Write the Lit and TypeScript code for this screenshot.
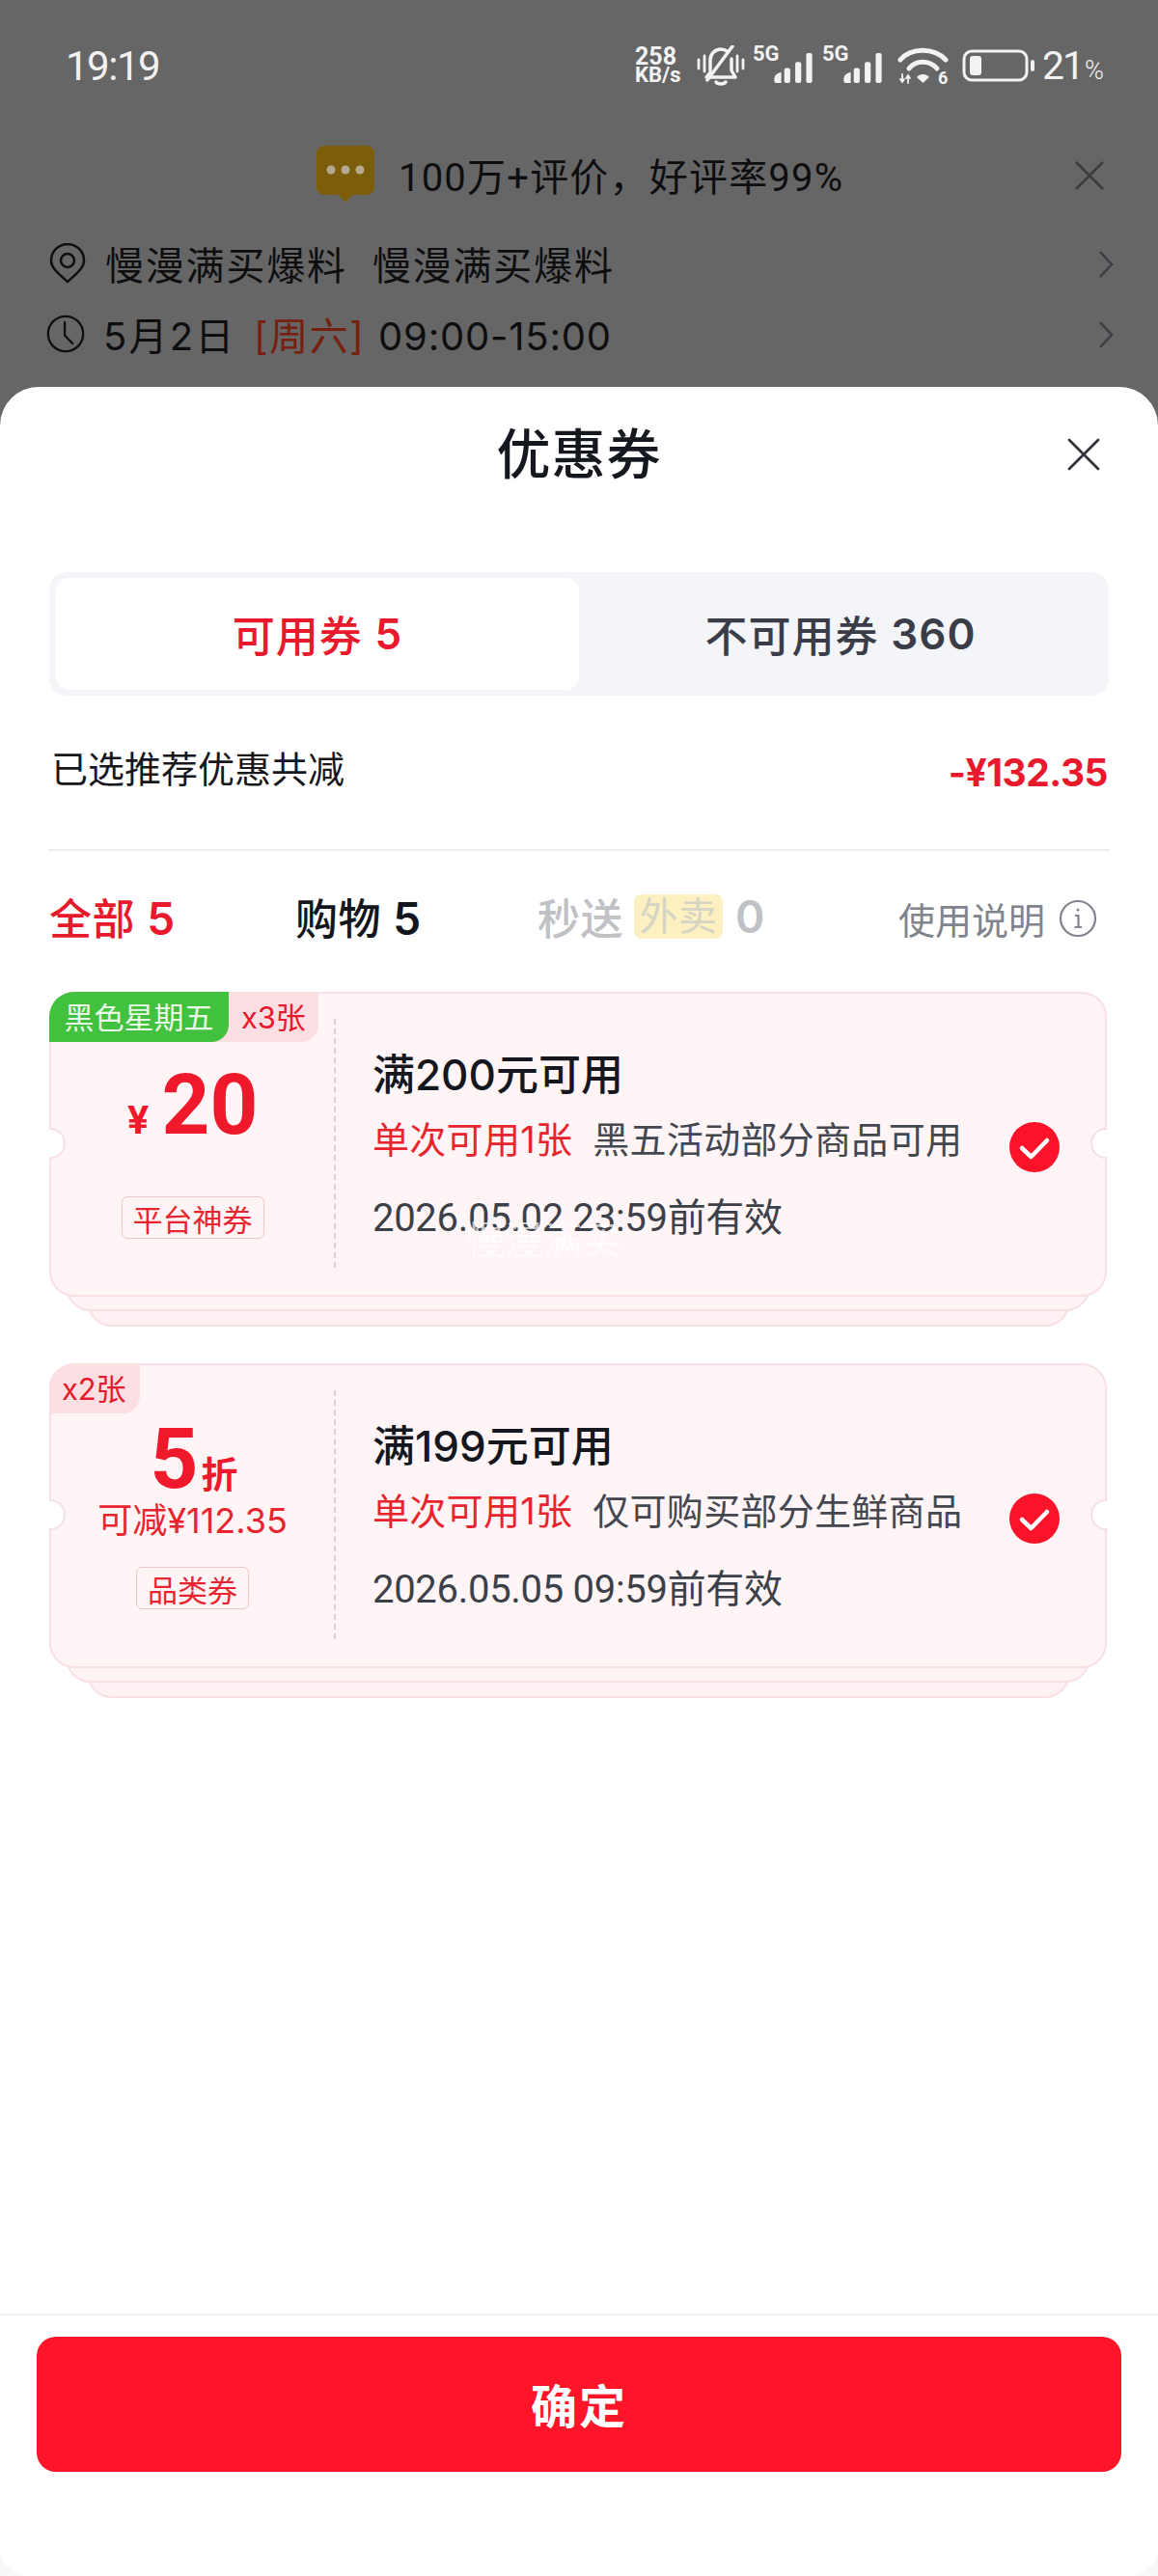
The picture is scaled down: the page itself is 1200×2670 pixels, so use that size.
import { LitElement, html, css, svg } from "lit";
import { customElement } from "lit/decorators.js";

const checkIcon = html`<svg class="check" viewBox="0 0 52 52"><circle cx="26" cy="26" r="26" fill="#fb1429"/><path d="M13 27l9.500 9L39 19" fill="none" stroke="#fff" stroke-width="4.500" stroke-linecap="round" stroke-linejoin="round"/></svg>`;

const signal = svg`<g fill="#f2f2f2"><path d="M0 26c0-3 2-6 7-7v11H2a2 2 0 0 1-2-2z"/><rect x="10" y="15" width="6" height="15" rx="2"/><rect x="21" y="9" width="6" height="21" rx="2"/><rect x="32" y="0" width="6" height="30" rx="2"/></g>`;

@customElement("app-root")
export class AppRoot extends LitElement {
  static styles = css`
    :host { display: block; width: 1200px; height: 2670px; overflow: hidden; background: #666; font-family: Inter, "Noto Sans CJK SC", sans-serif; color: #0e0e10; }
    * { box-sizing: border-box; }
    .page { display: flex; flex-direction: column; height: 2670px; }
    .top { height: 401px; flex: none; display: flex; flex-direction: column; }
    .status { height: 136px; flex: none; display: flex; align-items: center; justify-content: space-between; padding: 0 60px 0 68px; color: #f2f2f2; }
    .time { font-size: 42px; font-weight: 400; letter-spacing: -1.500px; font-family: Roboto, sans-serif; }
    .sicons { display: flex; align-items: center; }
    .speed { display: flex; flex-direction: column; font-family: Roboto, sans-serif; font-weight: 700; line-height: 19px; font-size: 25px; width: 54px; align-items: flex-start; margin-right: 10px; }
    .speed span:last-child { font-size: 22px; }
    .bell { width: 50px; height: 42px; margin-right: 8px; }
    .net { display: flex; width: 66px; height: 36px; position: relative; margin-right: 6px; }
    .net b { position: absolute; left: 0; top: -4px; font: 700 22px/20px Roboto, sans-serif; }
    .net svg { position: absolute; right: 0; bottom: 0; width: 48px; height: 31px; }
    .net + .wifi { margin-left: 6px; }
    .wifi { width: 54px; height: 40px; margin-right: 13px; }
    .batt { width: 76px; height: 34px; margin-right: 7px; }
    .pct { font: 400 41px/1 Roboto, sans-serif; display: flex; align-items: baseline; letter-spacing: -2px; width: 60px; }
    .pct small { font-size: 27px; margin-left: 2px; letter-spacing: 0; font-weight: 300; }
    .banner { height: 70px; flex: none; margin-top: 10px; display: flex; align-items: center; position: relative; padding-left: 328px; }
    .bubble { width: 60px; height: 60px; margin-right: 25px; }
    .banner span { font-size: 40px; letter-spacing: 1.200px; font-family: Roboto, "Noto Sans CJK SC", sans-serif; }
    .x { width: 30px; height: 30px; position: absolute; left: 1114px; top: 21px; }
    .row { display: flex; align-items: center; height: 60px; padding: 0 45px 0 50px; }
    .row.loc { margin-top: 27px; }
    .row.clk { margin-top: 13px; }
    .row svg.ic { width: 40px; height: 42px; flex: none; margin-right: 19px; }
    .row .txt { flex: 1; font-size: 40px; letter-spacing: 1.800px; white-space: pre; }
    .row.clk .txt { letter-spacing: 2.200px; }
    .row.clk svg.ic { margin-right: 19px; margin-left: -2px; height: 44px; }
    .row .wk { color: #77200f; margin-left: 5px; letter-spacing: 1.600px; }
    .row .tm { letter-spacing: 0.800px; margin-left: 0; }
    .row svg.chev { width: 18px; height: 30px; flex: none; margin-top: 2px; }
    .sheet { flex: 1; min-height: 0; background: #fff; border-radius: 40px 40px 0 0; display: flex; flex-direction: column; position: relative; }
    .head { height: 140px; flex: none; display: flex; align-items: center; justify-content: center; position: relative; padding-bottom: 10px; }
    .head h1 { margin: 0; font-size: 56px; font-weight: 500; color: #16181f; letter-spacing: 1px; }
    .head svg { position: absolute; left: 1106px; top: 53px; width: 34px; height: 34px; }
    .seg { margin: 52px 51px 0; height: 128px; flex: none; background: #f4f5f9; border-radius: 18px; padding: 6px 7px; display: flex; }
    .seg div { width: 542px; display: flex; align-items: center; justify-content: center; font-size: 44px; font-weight: 500; color: #3a3d48; letter-spacing: 1px; white-space: pre; }
    .seg div.on { background: #fff; border-radius: 14px; color: #e8192c; }
    .seg b { font-weight: 600; }
    .sum { margin: 0 52px 0 53px; height: 159px; flex: none; display: flex; justify-content: space-between; align-items: center; }
    .sum span { font-size: 38px; color: #17181d; margin-top: -12px; }
    .sum b { font-size: 39px; font-weight: 700; color: #e8192c; letter-spacing: -0.500px; }
    .rule { height: 2px; margin: 0 51px; background: #ececee; flex: none; }
    .filters { margin: 33px 51px 0 51px; height: 70px; flex: none; display: flex; align-items: center; font-size: 44px; font-weight: 500; }
    .filters > span { white-space: pre; letter-spacing: 0.500px; }
    .filters b { font-weight: 600; font-size: 46px; }
    .f1 { color: #e8192c; width: 255px; }
    .f2 { color: #14161d; width: 251px; }
    .f3 { color: #c0c1c5; display: flex; align-items: center; }
    .f3 em { font-style: normal; font-weight: 400; font-size: 40px; background: #fdf1c2; color: #d6d4c2; border-radius: 8px; height: 46px; line-height: 46px; width: 92px; text-align: center; margin: 0 13px 0 11px; }
    .help { margin-left: auto; display: flex; align-items: center; font-size: 38px; font-weight: 400; color: #81848e; gap: 14px; padding-top: 2px; }
    .help svg { width: 40px; height: 40px; margin-right: 12px; margin-top: 2px; }
    .list { display: flex; flex-direction: column; gap: 38px; margin: 43px 53px 0 51px; }
    .stack { position: relative; height: 347px; }
    .l3, .l2 { position: absolute; background: #fff1f3; border: 2px solid #f9e0e5; border-radius: 26px; }
    .l3 { left: 39px; right: 38px; top: 60px; bottom: 0; }
    .l2 { left: 17px; right: 17px; top: 60px; bottom: 16px; background: #fff3f5; }
    .card { position: absolute; left: 0; right: 0; top: 0; height: 316px; background: #fff5f6; border: 2px solid #f9e0e5; border-radius: 26px; display: flex; }
    .notch { position: absolute; width: 17px; height: 32px; background: #fff; border: 2px solid #f4e0e4; top: 141px; z-index: 1; }
    .notch.l { left: 0; border-left: 0; border-radius: 0 16px 16px 0; }
    .notch.r { right: 0; border-right: 0; border-radius: 16px 0 0 16px; }
    .tags { position: absolute; left: -2px; top: -2px; display: flex; height: 52px; background: #fbdfe3; border-radius: 26px 0 18px 0; }
    .tags .g { background: #42c13e; color: #e9f8e6; font-size: 31px; width: 186px; display: flex; align-items: center; justify-content: center; border-radius: 26px 0 18px 0; padding-bottom: 3px; }
    .tags .n { color: #e8192c; font-size: 31px; display: flex; align-items: center; padding: 0 14px 3px 13px; letter-spacing: -0.200px; }
    .tags .n.solo { padding: 0 15px 3px 13px; }
    .left { width: 293px; flex: none; display: flex; flex-direction: column; align-items: center; position: relative; color: #f0192c; }
    .amt { height: 200px; display: flex; align-items: baseline; justify-content: center; padding-top: 72px; line-height: 1; }
    .amt .y { font-size: 40px; font-weight: 700; margin-right: 13px; }
    .amt .v { font-family: Roboto, sans-serif; font-size: 87px; font-weight: 700; }
    .left.disc .amt { height: 104px; padding-top: 54px; padding-left: 3px; }
    .amt .z { font-size: 38px; font-weight: 700; margin-left: 3px; }
    .cut { font-size: 36px; color: #e8252f; line-height: 48px; margin-top: 33px; }
    .badge { border: 1.500px solid #e8c8cd; border-radius: 6px; height: 44px; padding: 0 11px; font-size: 31px; color: #e8252f; display: flex; align-items: center; white-space: nowrap; }
    .left.full .badge { margin-top: 10px; }
    .left.disc .badge { margin-top: 24px; }
    .dash { width: 0; margin: 26px 0 28px; border-left: 2px dashed #d8d2d4; flex: none; }
    .right { flex: 1; padding: 54px 0 0 38px; min-width: 0; }
    .t { font-size: 44px; font-weight: 500; color: #15171f; line-height: 60px; }
    .u { font-size: 38px; line-height: 50px; margin-top: 12px; color: #444750; white-space: nowrap; letter-spacing: 0.300px; }
    .u i { font-style: normal; color: #e8252f; margin-right: 21px; }
    .d { font-family: Roboto, "Noto Sans CJK SC", sans-serif; font-size: 40px; line-height: 50px; margin-top: 32px; color: #3c4049; letter-spacing: -0.300px; }
    .check { position: absolute; width: 52px; height: 52px; left: 993px; top: 133px; }
    .mark { position: absolute; left: 430px; top: 224px; font-size: 40px; color: rgba(255,255,255,0.7); z-index: 1; white-space: nowrap; }
    .foot { margin-top: auto; flex: none; height: 272px; background: #f8f8f8; }
    .footin { height: 100%; background: #fff; border-top: 2px solid #f3f3f4; border-radius: 0 0 30px 30px; padding: 22px 38px 0; }
    .btn { height: 140px; border-radius: 20px; background: #ff1428; color: #fff; font-size: 48px; font-weight: 700; display: flex; align-items: center; justify-content: center; letter-spacing: 2px; padding-bottom: 3px; }
  `;

  private coupon(o: { amount: any; title: string; note: string; date: string; mark?: boolean }) {
    return html`<div class="stack">
      <div class="l3"></div><div class="l2"></div>
      <div class="card">
        ${o.amount}
        <div class="dash"></div>
        <div class="right">
          <div class="t">${o.title}</div>
          <div class="u"><i>单次可用1张</i>${o.note}</div>
          <div class="d">${o.date}</div>
        </div>
        ${checkIcon}
        ${o.mark ? html`<div class="mark">慢漫满买</div>` : ""}
      </div>
      <div class="notch l"></div>
      <div class="notch r"></div>
    </div>`;
  }

  render() {
    return html`<div class="page">
      <div class="top">
        <div class="status">
          <span class="time">19:19</span>
          <div class="sicons">
            <div class="speed"><span>258</span><span>KB/s</span></div>
            <svg class="bell" viewBox="0 0 50 42" fill="none" stroke="#f2f2f2" stroke-width="3.500" stroke-linecap="round" stroke-linejoin="round"><path d="M2 15v9M8 11v16M42 11v16M48 15v9" stroke-width="2.800"/><path d="M14 26V15c0-6 5-11 11-11 3 0 5 1 7 2.500M36 14v12l4 7H10l4-5"/><path d="M37 1L11 36" /><path d="M20 38c1.500 2.500 8.500 2.500 10 0"/></svg>
            <div class="net"><b>5G</b><svg viewBox="0 0 38 30">${signal}</svg></div>
            <div class="net"><b>5G</b><svg viewBox="0 0 38 30">${signal}</svg></div>
            <svg class="wifi" viewBox="0 0 54 40" fill="none" stroke="#f2f2f2" stroke-linecap="round"><path d="M3 14C14 1 38 1 50 14" stroke-width="5"/><path d="M12 23C19 14 33 14 41 23" stroke-width="5"/><path d="M20 32C23 28 30 28 33 32L26.500 38z" fill="#f2f2f2" stroke="none"/><path d="M5 29v8M3 34l2 3 2-3M11 38v-8M9 33l2-3 2 3" stroke-width="1.800"/><text x="42" y="39" font-family="Roboto, sans-serif" font-size="18" font-weight="700" fill="#f2f2f2" stroke="none">6</text></svg>
            <svg class="batt" viewBox="0 0 76 34"><rect x="2" y="2" width="65" height="30" rx="8" fill="none" stroke="#f2f2f2" stroke-width="3"/><rect x="8" y="7" width="12" height="20" rx="3" fill="#f2f2f2"/><rect x="71" y="11" width="4" height="12" rx="2" fill="#f2f2f2"/></svg>
            <div class="pct">21<small>%</small></div>
          </div>
        </div>
        <div class="banner">
          <svg class="bubble" viewBox="0 0 60 60"><path d="M8 0h44a8 8 0 0 1 8 8v35a8 8 0 0 1-8 8H37l-7 8-7-8H8a8 8 0 0 1-8-8V8a8 8 0 0 1 8-8z" fill="#7c5e0a"/><g fill="#b3aa8f"><circle cx="15" cy="25" r="4.500"/><circle cx="30" cy="25" r="4.500"/><circle cx="45" cy="25" r="4.500"/></g></svg>
          <span>100万+评价，好评率99%</span>
          <svg class="x" viewBox="0 0 30 30" stroke="#3c3c3e" stroke-width="2.500" fill="none"><path d="M1 1l28 28M29 1L1 29"/></svg>
        </div>
        <div class="row loc">
          <svg class="ic" viewBox="0 0 40 42" fill="none" stroke="#0e0e10" stroke-width="2.500"><path d="M20 40C11 32 3 26 3 18a17 17 0 0 1 34 0c0 8-8 14-17 22z" stroke-linejoin="round"/><circle cx="20" cy="18" r="7"/></svg>
          <span class="txt">慢漫满买爆料  慢漫满买爆料</span>
          <svg class="chev" viewBox="0 0 18 30" fill="none" stroke="#3c3c44" stroke-width="2.500"><path d="M3 2l12 13L3 28"/></svg>
        </div>
        <div class="row clk">
          <svg class="ic" viewBox="0 0 44 44" fill="none" stroke="#0e0e10" stroke-width="2.500"><circle cx="22" cy="22" r="20"/><path d="M21 9v15l9 9" stroke-linecap="round"/></svg>
          <span class="txt">5月2日 <span class="wk">[周六]</span> <span class="tm">09:00-15:00</span></span>
          <svg class="chev" viewBox="0 0 18 30" fill="none" stroke="#3c3c44" stroke-width="2.500"><path d="M3 2l12 13L3 28"/></svg>
        </div>
      </div>
      <div class="sheet">
        <div class="head">
          <h1>优惠券</h1>
          <svg viewBox="0 0 34 34" fill="none" stroke="#33343b" stroke-width="2.800" stroke-linecap="round"><path d="M2 2l30 30M32 2L2 32"/></svg>
        </div>
        <div class="seg">
          <div class="on">可用券 <b>5</b></div>
          <div>不可用券 <b>360</b></div>
        </div>
        <div class="sum"><span>已选推荐优惠共减</span><b>-¥132.35</b></div>
        <div class="rule"></div>
        <div class="filters">
          <span class="f1">全部 <b>5</b></span>
          <span class="f2">购物 <b>5</b></span>
          <span class="f3">秒送<em>外卖</em><b>0</b></span>
          <div class="help"><span>使用说明</span><svg viewBox="0 0 40 40" fill="none" stroke="#81848e" stroke-width="2.200"><circle cx="20" cy="20" r="18"/><path d="M17 17h3.500v12M16.500 29h7.500" /><circle cx="20" cy="11" r="1.500" fill="#81848e" stroke="none"/></svg></div>
        </div>
        <div class="list">
          ${this.coupon({
            title: "满200元可用", note: "黑五活动部分商品可用", date: "2026.05.02 23:59前有效", mark: true,
            amount: html`<div class="left full">
              <div class="tags"><span class="g">黑色星期五</span><span class="n">x3张</span></div>
              <div class="amt"><span class="y">¥</span><span class="v">20</span></div>
              <div class="badge">平台神券</div>
            </div>`,
          })}
          ${this.coupon({
            title: "满199元可用", note: "仅可购买部分生鲜商品", date: "2026.05.05 09:59前有效",
            amount: html`<div class="left disc">
              <div class="tags"><span class="n solo">x2张</span></div>
              <div class="amt"><span class="v">5</span><span class="z">折</span></div>
              <div class="cut">可减¥112.35</div>
              <div class="badge">品类券</div>
            </div>`,
          })}
        </div>
        <div class="foot"><div class="footin"><div class="btn">确定</div></div></div>
      </div>
    </div>`;
  }
}
